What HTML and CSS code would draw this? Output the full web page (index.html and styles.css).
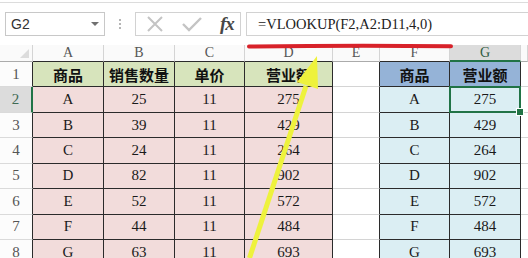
FILE: index.html
```html
<!DOCTYPE html>
<html lang="zh-CN">
<head>
  <meta charset="UTF-8" />
  <meta name="viewport" content="width=device-width, initial-scale=1.0"/>
  <title>VLOOKUP 查找营业额</title>
  <link rel="stylesheet" href="styles.css">
</head>
<body>
  <div class="app">

    <div class="formula-bar">
      <div class="name-box">
        <span>G2</span>
        <span class="caret"></span>
      </div>
      <div class="grip"><i></i><i></i><i></i></div>
      <div class="fx-buttons">
        <svg class="btn-icon" width="18" height="18" viewBox="0 0 18 18">
          <path d="M2 2 L16 16 M16 2 L2 16" stroke="#c4c4c4" stroke-width="2" fill="none"/>
        </svg>
        <svg class="btn-icon" width="20" height="18" viewBox="0 0 20 18">
          <path d="M1 9 L7 15 L19 3" stroke="#c4c4c4" stroke-width="2.4" fill="none"/>
        </svg>
        <span class="fx">fx</span>
      </div>
      <div class="formula-input">=VLOOKUP(F2,A2:D11,4,0)</div>
    </div>

    <div class="sheet">
      <!-- column headers -->
      <div class="corner"><span class="tri"></span></div>
      <div class="col top">A</div>
      <div class="col top">B</div>
      <div class="col top">C</div>
      <div class="col top">D</div>
      <div class="col">E</div>
      <div class="col top">F</div>
      <div class="col top active">G</div>
      <div class="col"></div>

      <!-- row 1 -->
      <div class="row">1</div>
      <div class="cell tb head-green">商品</div>
      <div class="cell tb head-green">销售数量</div>
      <div class="cell tb head-green">单价</div>
      <div class="cell tb head-green">营业额</div>
      <div class="cell blank"></div>
      <div class="cell tb head-blue">商品</div>
      <div class="cell tb head-blue">营业额</div>
      <div class="cell rest"></div>

      <!-- row 2 -->
      <div class="row active">2</div>
      <div class="cell tb pink">A</div>
      <div class="cell tb pink">25</div>
      <div class="cell tb pink">11</div>
      <div class="cell tb pink">275</div>
      <div class="cell blank"></div>
      <div class="cell tb blue">A</div>
      <div class="cell tb blue sel">275</div>
      <div class="cell rest"></div>

      <!-- row 3 -->
      <div class="row">3</div>
      <div class="cell tb pink">B</div>
      <div class="cell tb pink">39</div>
      <div class="cell tb pink">11</div>
      <div class="cell tb pink">429</div>
      <div class="cell blank"></div>
      <div class="cell tb blue">B</div>
      <div class="cell tb blue">429</div>
      <div class="cell rest"></div>

      <!-- row 4 -->
      <div class="row">4</div>
      <div class="cell tb pink">C</div>
      <div class="cell tb pink">24</div>
      <div class="cell tb pink">11</div>
      <div class="cell tb pink">264</div>
      <div class="cell blank"></div>
      <div class="cell tb blue">C</div>
      <div class="cell tb blue">264</div>
      <div class="cell rest"></div>

      <!-- row 5 -->
      <div class="row">5</div>
      <div class="cell tb pink">D</div>
      <div class="cell tb pink">82</div>
      <div class="cell tb pink">11</div>
      <div class="cell tb pink">902</div>
      <div class="cell blank"></div>
      <div class="cell tb blue">D</div>
      <div class="cell tb blue">902</div>
      <div class="cell rest"></div>

      <!-- row 6 -->
      <div class="row">6</div>
      <div class="cell tb pink">E</div>
      <div class="cell tb pink">52</div>
      <div class="cell tb pink">11</div>
      <div class="cell tb pink">572</div>
      <div class="cell blank"></div>
      <div class="cell tb blue">E</div>
      <div class="cell tb blue">572</div>
      <div class="cell rest"></div>

      <!-- row 7 -->
      <div class="row">7</div>
      <div class="cell tb pink">F</div>
      <div class="cell tb pink">44</div>
      <div class="cell tb pink">11</div>
      <div class="cell tb pink">484</div>
      <div class="cell blank"></div>
      <div class="cell tb blue">F</div>
      <div class="cell tb blue">484</div>
      <div class="cell rest"></div>

      <!-- row 8 -->
      <div class="row">8</div>
      <div class="cell tb pink">G</div>
      <div class="cell tb pink">63</div>
      <div class="cell tb pink">11</div>
      <div class="cell tb pink">693</div>
      <div class="cell blank"></div>
      <div class="cell tb blue">G</div>
      <div class="cell tb blue">693</div>
      <div class="cell rest"></div>
    </div>

    <!-- hand-drawn annotations over the sheet -->
    <svg class="marks" width="528" height="258" viewBox="0 0 528 258">
      <path d="M249 46.5 Q350 45.2 451 46.2" stroke="#d8222a" stroke-width="4" stroke-linecap="round" fill="none"/>
      <path d="M249.5 258 L306 86" stroke="#eef23c" stroke-width="5" fill="none"/>
      <polygon points="317,56 297,82 318,89" fill="#eef23c"/>
    </svg>

  </div>
</body>
</html>
```

FILE: styles.css
```css
* {
  box-sizing: border-box;
}

body {
  margin: 0;
  background-color: #ffffff;
  font-family: "Liberation Serif", "Times New Roman", serif;
  color: #1a1a1a;
}

.app {
  position: relative;
  width: 528px;
  height: 258px;
  overflow: hidden;
}

/* formula bar */

.formula-bar {
  display: flex;
  align-items: flex-start;
  margin-top: 2px;
  height: 43px;
  padding-top: 9px;
  border-top: 1px solid #dcdcdc;
}

.name-box {
  display: flex;
  align-items: center;
  justify-content: space-between;
  width: 100px;
  height: 24px;
  margin-left: 5px;
  padding: 0 5px 0 5px;
  border: 1px solid #c8c8c8;
  font-family: "Liberation Sans", Arial, sans-serif;
  font-size: 14px;
  color: #333;
}

.caret {
  width: 0;
  height: 0;
  border-left: 4px solid transparent;
  border-right: 4px solid transparent;
  border-top: 4px solid #707070;
}

.grip {
  display: flex;
  flex-direction: column;
  align-items: center;
  justify-content: center;
  gap: 2px;
  width: 30px;
  height: 24px;
}

.grip i {
  width: 2px;
  height: 2px;
  background-color: #b5b5b5;
}

.fx-buttons {
  display: flex;
  align-items: center;
  width: 106px;
  height: 24px;
  padding-left: 10px;
  gap: 18px;
  border: 1px solid #d2d2d2;
}

.fx {
  font-family: "Liberation Serif", "Times New Roman", serif;
  font-style: italic;
  font-weight: bold;
  font-size: 19px;
  color: #474747;
  letter-spacing: -1px;
}

.formula-input {
  flex: 1;
  height: 24px;
  margin-left: 5px;
  margin-right: -2px;
  padding-left: 11px;
  line-height: 22px;
  border: 1px solid #d2d2d2;
  font-size: 14.5px;
  color: #222;
}

/* sheet grid */

.sheet {
  display: grid;
  grid-template-columns: 33px 71px 71px 70px 88px 47px 70px 71px 1fr;
  grid-template-rows: 17px repeat(8, 25.43px);
  height: 213px;
  overflow: hidden;
}

.sheet > div {
  display: flex;
  align-items: center;
  justify-content: center;
  font-size: 15px;
}

.corner {
  position: relative;
  border-right: 1px solid #d4d4d4;
  border-bottom: 1px solid #ababab;
  background-color: #fafafa;
}

.tri {
  position: absolute;
  right: 3px;
  bottom: 3px;
  width: 0;
  height: 0;
  border-left: 9px solid transparent;
  border-bottom: 9px solid #dcdcdc;
}

.sheet > .col {
  font-size: 14px;
  background-color: #fafafa;
  color: #555;
  border-right: 1px solid #d4d4d4;
  border-bottom: 1px solid #ababab;
}

.col.top {
  border-bottom-color: #2b2b2b;
}

.col.active {
  background-color: #dcdcdc;
  color: #2f5b3f;
  border-bottom: 2px solid #217346;
}

.sheet > .row {
  font-size: 15px;
  background-color: #fcfcfc;
  color: #555;
  border-right: 1px solid #2b2b2b;
  border-bottom: 1px solid #dadada;
}

.row.active {
  background-color: #dcdcdc;
  color: #3f6a55;
  border-right: 2px solid #217346;
}

.cell {
  border-bottom: 1px solid #d4d4d4;
}

.cell.tb {
  border-right: 1px solid #2b2b2b;
  border-bottom: 1px solid #2b2b2b;
}

.cell.blank {
  border-right: 1px solid #2b2b2b;
}

.head-green {
  background-color: #d7e4bc;
}

.head-blue {
  background-color: #95b3d7;
}

.sheet > .head-green,
.sheet > .head-blue {
  font-family: "Noto Sans CJK SC", sans-serif;
  font-weight: 700;
  font-size: 15px;
  color: #111;
}

.pink {
  background-color: #f2dcdb;
}

.blue {
  background-color: #dbeef3;
}

.sel {
  position: relative;
}

.sel::after {
  content: "";
  position: absolute;
  top: -1px;
  left: -1px;
  right: -1px;
  bottom: -1px;
  border: 2px solid #217346;
}

.sel::before {
  content: "";
  position: absolute;
  right: -4px;
  bottom: -4px;
  width: 6px;
  height: 6px;
  background-color: #217346;
  border: 1px solid #fff;
  z-index: 2;
}

/* annotations */

.marks {
  position: absolute;
  top: 0;
  left: 0;
  pointer-events: none;
}
```
